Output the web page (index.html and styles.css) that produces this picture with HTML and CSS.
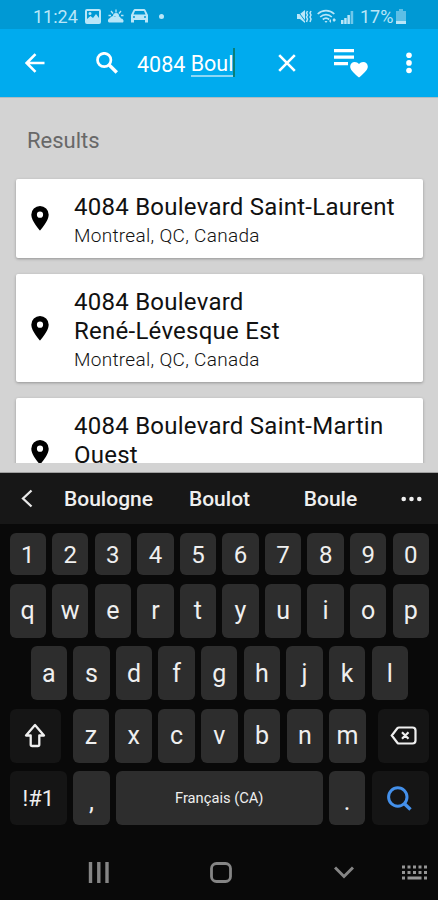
FILE: index.html
```
<!DOCTYPE html>
<html lang="en">
<head>
    <meta charset="UTF-8">
    <meta name="viewport" content="width=device-width, initial-scale=1.0">
    <link rel="stylesheet" href="styles.css">
    <title>Search</title>
</head>
<body>

<div class="phone">
    <div class="status-bar">
        <span class="clock">11:24</span>
        <svg class="st-photo" width="16" height="15" viewBox="0 0 16 15"><path fill-rule="evenodd" d="M2 0h12a2 2 0 0 1 2 2v11a2 2 0 0 1-2 2H2a2 2 0 0 1-2-2V2a2 2 0 0 1 2-2zM2 2v8l3.500-3 2.500 2 3-4 3 4V2zM5 3a1.500 1.500 0 1 1 0 3 1.500 1.500 0 0 1 0-3z"/></svg>
        <svg class="st-weather" width="16" height="14" viewBox="0 0 16 14"><path d="M1 13.500a2.500 2.500 0 0 1 1-4.500 3.500 3.500 0 0 1 5-1.500 4 4 0 0 1 6 2 2.500 2.500 0 0 1 2 4z"/><path d="M8 .5v3M3 2l2 2.500M13 2l-2 2.500M.5 6.500h2.500M13 6.500h2.500" stroke="#b9e6f8" stroke-width="1.300"/><path d="M5 7a3 3 0 0 1 6 0z"/></svg>
        <svg class="st-car" width="17" height="14" viewBox="0 0 17 14"><path fill-rule="evenodd" d="M4 0h9a2 2 0 0 1 1.500 1L17 6v7.500h-3V11H3v2.500H0V6l2.500-5A2 2 0 0 1 4 0zM4 2 2.500 5.500h12L13 2zM3 7a1 1 0 1 0 0 2 1 1 0 0 0 0-2zm11 0a1 1 0 1 0 0 2 1 1 0 0 0 0-2z"/></svg>
        <span class="st-dot"></span>
        <svg class="st-mute" width="15" height="15" viewBox="0 0 15 15"><path d="M0 5h3l5-4v13l-5-4H0z"/><path d="M0 1l9 12" stroke="#0099d4" stroke-width="1"/><path d="M10.500 2l-1 2 1 2-1 2 1 2-1 3M14 2l-1 2 1 2-1 2 1 2-1 3" fill="none" stroke="#b9e6f8" stroke-width="1.500"/></svg>
        <svg class="st-wifi" width="20" height="15" viewBox="0 0 20 15"><g fill="none" stroke="#b9e6f8" stroke-width="1.700"><path d="M.7 5a12 12 0 0 1 16.600 0M3.200 8a8.500 8.500 0 0 1 11.600 0M5.800 10.500a5 5 0 0 1 6.400 0"/></g><path d="M7.500 12h3L9 14zM12 12l2-2v4zM17 9l2 2-2 2-1.500-2z"/></svg>
        <svg class="st-signal" width="13" height="15" viewBox="0 0 13 15"><path d="M0 11h2.500v4H0zM3.200 9h2.500v6H3.200zM6.400 6h2.500v9H6.400z"/><path opacity=".6" d="M9.600 2h2.600v13H9.600z"/></svg>
        <span class="percent">17%</span>
        <svg class="st-battery" width="10" height="15" viewBox="0 0 10 15"><path opacity=".5" d="M3 0h4v2h3v9H0V2h3z"/><path d="M0 11.500h10V15H0z"/></svg>
    </div>

    <div class="search-bar">
        <svg class="back" width="20" height="20" viewBox="0 0 20 20"><path d="M19.500 10H2M10.500 1.200 1.700 10l8.800 8.800" fill="none" stroke="#fff" stroke-width="2.600"/></svg>
        <svg class="magnifier" width="22" height="22" viewBox="0 0 22 22"><circle cx="8.200" cy="8" r="6.700" fill="none" stroke="#fff" stroke-width="2.700"/><path d="M13.200 13l7.600 7.500" stroke="#fff" stroke-width="3.400"/></svg>
        <div class="query">4084 <span class="composing">Boul</span><span class="caret"></span></div>
        <svg class="clear" width="18" height="18" viewBox="0 0 18 18"><path d="M1.200 1.200l15.600 15.600M16.800 1.200 1.200 16.800" stroke="#fff" stroke-width="2.600"/></svg>
        <svg class="favourites" width="34" height="29" viewBox="0 0 34 29"><path d="M0 0h20v3.200H0zM0 6.500h20v3.200H0zM0 13h14v3.200H0z"/><path d="M25 28.500l-1.300-1.100C19 23.200 16.200 20.700 16.200 17.500c0-2.600 2-4.600 4.600-4.600 1.600 0 3.200.8 4.200 2 1-1.200 2.600-2 4.200-2 2.600 0 4.600 2 4.600 4.600 0 3.200-2.800 5.700-7.500 9.900z"/></svg>
        <svg class="more" width="6" height="22" viewBox="0 0 6 22"><circle cx="3" cy="3.200" r="2.800"/><circle cx="3" cy="10.900" r="2.800"/><circle cx="3" cy="18.500" r="2.800"/></svg>
    </div>

    <div class="results">
        <h2>Results</h2>
        <div class="list">
            <div class="card">
                <svg class="pin" width="18" height="25" viewBox="0 0 18 25"><path fill-rule="evenodd" d="M9 0a8.700 8.700 0 0 0-8.700 8.700C.3 15.200 9 24.500 9 24.500s8.700-9.300 8.700-15.800A8.700 8.700 0 0 0 9 0zm0 5.600a3.100 3.100 0 1 1 0 6.200 3.100 3.100 0 0 1 0-6.200z"/></svg>
                <div>
                    <div class="street">4084 Boulevard Saint-Laurent</div>
                    <div class="city">Montreal, QC, Canada</div>
                </div>
            </div>
            <div class="card">
                <svg class="pin" width="18" height="25" viewBox="0 0 18 25"><path fill-rule="evenodd" d="M9 0a8.700 8.700 0 0 0-8.700 8.700C.3 15.200 9 24.500 9 24.500s8.700-9.300 8.700-15.800A8.700 8.700 0 0 0 9 0zm0 5.600a3.100 3.100 0 1 1 0 6.200 3.100 3.100 0 0 1 0-6.200z"/></svg>
                <div>
                    <div class="street">4084 Boulevard<br>René-Lévesque Est</div>
                    <div class="city">Montreal, QC, Canada</div>
                </div>
            </div>
            <div class="card tall">
                <svg class="pin" width="18" height="25" viewBox="0 0 18 25"><path fill-rule="evenodd" d="M9 0a8.700 8.700 0 0 0-8.700 8.700C.3 15.200 9 24.500 9 24.500s8.700-9.300 8.700-15.800A8.700 8.700 0 0 0 9 0zm0 5.600a3.100 3.100 0 1 1 0 6.200 3.100 3.100 0 0 1 0-6.200z"/></svg>
                <div class="street">4084 Boulevard Saint-Martin<br>Ouest</div>
            </div>
        </div>
    </div>

    <div class="suggestions">
        <svg class="prev" width="12" height="19" viewBox="0 0 12 19"><path d="M10.500 1.500 2 9.500l8.500 8" fill="none" stroke="#e8e8e8" stroke-width="2.300"/></svg>
        <span>Boulogne</span>
        <span>Boulot</span>
        <span>Boule</span>
        <svg class="dots" width="21" height="6" viewBox="0 0 21 6"><circle cx="2.700" cy="3" r="2.300"/><circle cx="10.500" cy="3" r="2.300"/><circle cx="18.300" cy="3" r="2.300"/></svg>
    </div>

    <div class="keyboard">
        <div class="row numbers">
            <div class="key">1</div><div class="key">2</div><div class="key">3</div><div class="key">4</div><div class="key">5</div><div class="key">6</div><div class="key">7</div><div class="key">8</div><div class="key">9</div><div class="key">0</div>
        </div>
        <div class="row">
            <div class="key">q</div><div class="key">w</div><div class="key">e</div><div class="key">r</div><div class="key">t</div><div class="key">y</div><div class="key">u</div><div class="key">i</div><div class="key">o</div><div class="key">p</div>
        </div>
        <div class="row home">
            <div class="key">a</div><div class="key">s</div><div class="key">d</div><div class="key">f</div><div class="key">g</div><div class="key">h</div><div class="key">j</div><div class="key">k</div><div class="key">l</div>
        </div>
        <div class="row">
            <div class="key dark shift">
                <svg width="22" height="25" viewBox="0 0 22 25"><path d="M11 2 2 12.500h4.700v9q0 1.500 1.500 1.500h5.600q1.500 0 1.500-1.500v-9H20z" fill="none" stroke="#efefef" stroke-width="2.300" stroke-linejoin="round"/></svg>
            </div>
            <div class="key">z</div><div class="key">x</div><div class="key">c</div><div class="key">v</div><div class="key">b</div><div class="key">n</div><div class="key">m</div>
            <div class="key dark backspace">
                <svg width="27" height="19" viewBox="0 0 27 19"><path d="M9 1.500h13.500q3 0 3 3v10q0 3-3 3H9q-1 0-1.700-.8L1.800 9.500l5.500-7.200Q8 1.500 9 1.500zM12 6.200l6.500 6.600M18.500 6.200 12 12.800" fill="none" stroke="#efefef" stroke-width="2.200"/></svg>
            </div>
        </div>
        <div class="row">
            <div class="key dark symbols">!#1</div>
            <div class="key punct">,</div>
            <div class="key space">Français (CA)</div>
            <div class="key punct">.</div>
            <div class="key dark go">
                <svg width="25" height="25" viewBox="0 0 25 25"><circle cx="10.800" cy="11" r="9.200" fill="none" stroke="#4490ea" stroke-width="3"/><path d="M17.200 17.500l6.300 6" stroke="#4490ea" stroke-width="3.400"/></svg>
            </div>
        </div>
    </div>

    <div class="nav-bar">
        <svg class="recents" width="22" height="21" viewBox="0 0 22 21"><path d="M2.500 0v21M10.800 0v21M19 0v21" stroke="#858585" stroke-width="3.400"/></svg>
        <svg class="home-btn" width="22" height="21" viewBox="0 0 22 21"><rect x="1.500" y="1.500" width="19" height="18" rx="5" fill="none" stroke="#858585" stroke-width="2.800"/></svg>
        <svg class="hide" width="20" height="13" viewBox="0 0 20 13"><path d="M1 1.500l9 9 9-9" fill="none" stroke="#858585" stroke-width="3"/></svg>
        <svg class="switch" width="25" height="15" viewBox="0 0 25 15"><path d="M0 2h25M0 7.500h25" stroke="#959595" stroke-width="3" stroke-dasharray="3 2.500"/><path d="M0 13h3M5.500 13h14M22 13h3" stroke="#959595" stroke-width="3"/></svg>
    </div>
</div>

</body>
</html>
```
FILE: styles.css
```
body {
    margin: 0;
    font-family: Roboto, "Liberation Sans", sans-serif;
    background-color: #090909;
}

svg {
    display: block;
    flex: none;
}

.phone {
    width: 438px;
    height: 900px;
    display: flex;
    flex-direction: column;
    overflow: hidden;
}

/* Status bar */
.status-bar {
    height: 29px;
    background-color: #0099d4;
    color: #b9e6f8;
    fill: #b9e6f8;
    display: flex;
    align-items: center;
    padding: 3px 32px 0 33px;
    box-sizing: border-box;
    font-size: 18px;
}

.clock {
    width: 52px;
}

.st-weather {
    margin-left: 7px;
}

.st-car {
    margin-left: 7px;
}

.st-dot {
    width: 5px;
    height: 5px;
    border-radius: 50%;
    background-color: #b9e6f8;
    margin-left: 11px;
}

.st-mute {
    margin-left: auto;
}

.st-wifi {
    margin-left: 5px;
}

.st-signal {
    margin-left: 4px;
}

.percent {
    margin-left: 6px;
    width: 36px;
}

/* Search bar */
.search-bar {
    height: 68px;
    background-color: #00abee;
    fill: #fff;
    color: #fff;
    display: flex;
    align-items: center;
    padding-left: 25px;
    box-sizing: border-box;
}

.magnifier {
    margin-left: 51px;
}

.query {
    display: flex;
    align-items: center;
    white-space: pre;
    margin-left: 19px;
    width: 141px;
    font-size: 21.5px;
    padding-top: 2px;
}

.composing {
    border-bottom: 2px solid #8cd7f5;
    line-height: 22px;
    padding-top: 2px;
}

.caret {
    width: 2px;
    height: 29px;
    margin-top: -3px;
    background-color: #087f77;
}

.favourites {
    margin-left: 38px;
}

.more {
    margin-left: 38px;
}

/* Results */
.results {
    height: 376px;
    background-color: #d3d3d3;
    box-sizing: border-box;
    border-top: 1px solid #aebcc2;
    border-bottom: 1px solid #a0a0a0;
}

h2 {
    margin: 0;
    padding: 29px 0 0 27px;
    font-size: 22px;
    line-height: 28px;
    font-weight: 400;
    color: #686868;
}

.list {
    height: 308px;
    box-sizing: border-box;
    padding: 24px 15px 0 16px;
    overflow: hidden;
}

.card {
    background-color: #fff;
    border-radius: 2px;
    box-shadow: 0 1px 3px rgba(0, 0, 0, 0.3);
    display: flex;
    align-items: center;
    padding: 14px 15px 9px;
    margin-bottom: 16px;
}

.tall {
    height: 85px;
}

.pin {
    margin-right: 25px;
    margin-bottom: 5px;
}

.street {
    font-size: 24px;
    line-height: 29px;
    letter-spacing: 0.25px;
    color: #111;
    white-space: nowrap;
}

.tall .street {
    align-self: flex-start;
}

.city {
    font-size: 19px;
    line-height: 27px;
    font-weight: 300;
    letter-spacing: 0.3px;
    color: #111;
}

/* Keyboard */
.suggestions {
    height: 51px;
    background-color: #171717;
    color: #efefef;
    fill: #efefef;
    display: flex;
    align-items: center;
    padding-left: 21px;
    font-size: 21px;
    font-weight: 500;
}

.suggestions span {
    width: 111px;
    text-align: center;
    padding-top: 1px;
}

.prev {
    margin-right: 20px;
}

.dots {
    margin-left: 15px;
}

.keyboard {
    background-color: #090909;
    padding: 9px 9px 0 9.5px;
    display: flex;
    flex-direction: column;
    gap: 8.5px;
}

.row {
    display: flex;
    gap: 6.2px;
    height: 54px;
}

.numbers {
    height: 42px;
}

.home {
    padding: 0 21px;
}

.key {
    flex: 1;
    background-color: #2d2d2d;
    border-radius: 6px;
    color: #efefef;
    font-size: 25px;
    display: flex;
    align-items: center;
    justify-content: center;
}

.numbers .key {
    font-size: 24px;
    padding-top: 2px;
    height: 40px;
}

.dark {
    background-color: #151515;
}

.shift {
    flex: none;
    width: 51px;
    margin-right: 6px;
}

.backspace {
    flex: none;
    width: 51px;
    margin-left: 6px;
}

.symbols,
.go {
    flex: none;
    width: 57.5px;
    font-size: 22px;
}

.go {
    padding-right: 2px;
    width: 55.5px;
}

.punct {
    flex: none;
    width: 36.5px;
    box-sizing: border-box;
    padding-top: 6px;
}

.space {
    font-size: 14.7px;
}

/* Navigation bar */
.nav-bar {
    flex: 1;
    display: flex;
    align-items: center;
    padding: 20px 0 0 88px;
}

.home-btn {
    margin-left: 100px;
}

.hide {
    margin-left: 102px;
}

.switch {
    margin-left: 48px;
}
```
